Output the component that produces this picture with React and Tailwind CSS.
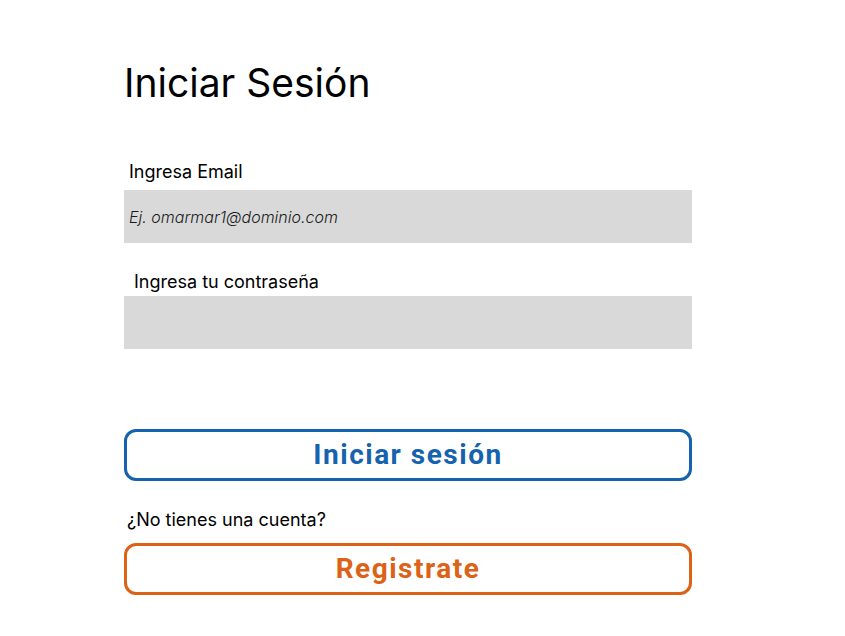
export default function App() {
    return (
        <div className="min-h-screen bg-white font-['Inter',sans-serif] text-black">
            <div className="w-[568px] ml-[124px] pt-[59px]">
                <h1 className="text-[39px] leading-[48px] font-normal">Iniciar Sesión</h1>

                <form className="mt-[52px]">
                    <label className="block">
                        <span className="block pl-[5px] text-[18px] leading-[26px]">Ingresa Email</span>
                        <input
                            type="email"
                            placeholder="Ej. omarmar1@dominio.com"
                            className="mt-[5px] w-full h-[53px] bg-[#d9d9d9] px-[5px] text-[16px] italic font-light placeholder:text-[#1a1a1a] outline-none"
                        />
                    </label>

                    <label className="block mt-[26px]">
                        <span className="block pl-[10px] text-[18px] leading-[26px]">Ingresa tu contraseña</span>
                        <input
                            type="password"
                            className="mt-px w-full h-[53px] bg-[#d9d9d9] px-[5px] text-[16px] outline-none"
                        />
                    </label>

                    <button
                        type="button"
                        className="mt-[80px] w-full h-[52px] border-[3px] border-[#1663ad] rounded-[12px] text-[#1663ad] text-[28px] font-bold tracking-[1.5px] font-['Roboto',sans-serif]"
                    >
                        Iniciar sesión
                    </button>
                </form>

                <p className="mt-[26px] pl-[3px] text-[18px] leading-[26px]">¿No tienes una cuenta?</p>

                <button
                    type="button"
                    className="mt-[10px] w-full h-[52px] border-[3px] border-[#dc6218] rounded-[12px] text-[#dc6218] text-[28px] font-bold tracking-[1.5px] font-['Roboto',sans-serif]"
                >
                    Registrate
                </button>
            </div>
        </div>
    );
}
